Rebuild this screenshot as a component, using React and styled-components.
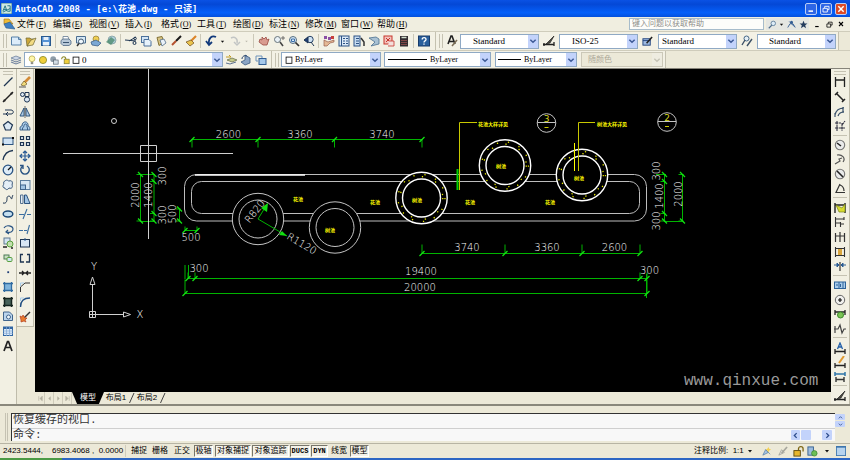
import styled, { createGlobalStyle, css } from 'styled-components';

const GlobalStyle = createGlobalStyle`
  * { box-sizing: border-box; }
  body {
    margin: 0;
    background: #ece9d8;
    font-family: "Liberation Sans", "Noto Sans CJK SC", sans-serif;
    font-size: 9px;
    line-height: 12px;
    color: #000;
  }
  button, input, select {
    font: inherit;
    color: inherit;
    margin: 0;
    padding: 0;
    border: 0;
    background: none;
    border-radius: 0;
  }
  svg { display: block; }
`;

const Window = styled.div`
  display: flex;
  flex-direction: column;
  min-height: 100vh;
  background: #ece9d8;
`;

/* ---------- title bar ---------- */

const TitleBar = styled.header`
  display: flex;
  align-items: center;
  height: 17px;
  padding: 0 3px 0 1px;
  gap: 3px;
  background: linear-gradient(#0a52e4, #0448d6 25%, #0560fa 75%, #0450dc);
  color: #fff;
`;

const Title = styled.h1`
  flex: 1;
  margin: 0;
  font: bold 9px/14px "DejaVu Sans Mono", "Noto Sans CJK SC", monospace;
  white-space: pre;
`;

const WindowButton = styled.button`
  display: flex;
  align-items: center;
  justify-content: center;
  width: 12px;
  height: 12px;
  border: 1px solid #b9cdf6;
  border-radius: 2px;
  background: ${props => (props.$close ? '#dc4a26' : '#2e66e6')};
`;

/* ---------- menu bar ---------- */

const MenuBar = styled.nav`
  display: flex;
  align-items: center;
  height: 14px;
  padding: 0 3px 0 3px;
  background: #f0eee0;
`;

const MenuItem = styled.button`
  width: 36px;
  text-align: left;
  white-space: nowrap;
  font: 9px/12px "Liberation Serif", "Noto Sans CJK SC", serif;
`;

const MenuKey = styled.span`
  margin-left: 1px;
  font-size: 8px;
`;

const MenuLogo = styled.span`
  width: 14px;
`;

const MenuSpace = styled.span`
  flex: 1;
`;

const HelpInput = styled.input`
  width: 135px;
  height: 12px;
  padding: 0 2px;
  border: 1px solid #a7bccb;
  background: #fdfdfa;
  font-size: 8px;
  &::placeholder { color: #8f8f8a; }
`;

const MenuTools = styled.div`
  display: flex;
  align-items: center;
  height: 12px;
  margin-left: 2px;
  margin-right: 2px;
  background: #e4e6e2;
`;

/* ---------- toolbars ---------- */

const ToolRow = styled.div`
  display: flex;
  align-items: center;
  height: ${props => props.$height}px;
  border-top: 1px solid #cfccbb;
`;

const ToolBar = styled.div`
  display: flex;
  align-items: center;
  height: 100%;
  padding-left: 3px;
  padding-right: ${props => props.$end || 3}px;
  background: #f3f1e5;
  border-right: 1px solid #c4c1b0;
`;

const Grip = styled.span`
  width: 4px;
  height: 14px;
  margin-right: 1px;
  border-left: 1px solid #c5c2b2;
  border-right: 1px solid #c5c2b2;
`;

const ToolButton = styled.button`
  display: flex;
  align-items: center;
  justify-content: center;
  width: ${props => props.$width || 15}px;
  height: 15px;
  flex: none;
`;

const Separator = styled.span`
  width: 1px;
  height: 14px;
  margin: 0 2px;
  background: #cbc8b8;
`;

const Combo = styled.label`
  display: flex;
  align-items: center;
  gap: 1px;
  width: ${props => props.$width}px;
  min-width: 0;
  height: 15px;
  margin-left: ${props => props.$before || 1}px;
  padding-left: ${props => props.$indent || 3}px;
  border: 1px solid ${props => (props.$off ? '#cbc8b8' : '#8fa9c4')};
  background: ${props => (props.$off ? '#ece9d8' : '#fff')};
  color: ${props => (props.$off ? '#aca899' : '#000')};
`;

const Choice = styled.select`
  flex: 1;
  min-width: 0;
  appearance: none;
  font: ${props => props.$size || 9}px/12px "Liberation Serif", "Noto Sans CJK SC", serif;
  opacity: 1;
`;

const Arrow = styled.span`
  display: flex;
  align-items: center;
  justify-content: center;
  width: 10px;
  height: 13px;
  flex: none;
  background: ${props => (props.$off ? '#eeece0' : '#c3d3fb')};
`;

/* ---------- work area ---------- */

const Work = styled.main`
  display: flex;
  flex: 1;
  align-items: stretch;
  border-top: 1px solid #86847a;
`;

const Palette = styled.div`
  display: flex;
  flex-direction: column;
  width: ${props => props.$width}px;
  align-self: ${props => (props.$short ? 'flex-start' : 'stretch')};
  padding-top: 2px;
  background: #f2f0e3;
  border-right: 1px solid #bfbcab;
  ${props => props.$short && css`
    padding-bottom: 2px;
    border-bottom: 1px solid #bfbcab;
  `}
`;

const PaletteGrip = styled.span`
  height: 4px;
  margin: 0 3px 0;
  border-top: 1px solid #c5c2b2;
  border-bottom: 1px solid #c5c2b2;
`;

const PaletteList = styled.div`
  display: flex;
  flex-direction: column;
  height: ${props => props.$height}px;
`;

const PaletteButton = styled.button`
  display: flex;
  flex: 1;
  align-items: center;
  justify-content: center;
`;

const PaletteRule = styled.span`
  height: 1px;
  margin: 1px 2px 2px;
  background: #c5c2b2;
`;

const Center = styled.section`
  display: flex;
  flex-direction: column;
  flex: 1;
  min-width: 0;
  margin-left: 1px;
`;

const Canvas = styled.div`
  flex: 1;
  background: #000;
  svg { width: 100%; height: auto; }
`;

const Tabs = styled.div`
  display: flex;
  align-items: stretch;
  height: 12px;
  padding-left: 1px;
  background: #ece9d8;
`;

const TabNav = styled.button`
  display: flex;
  align-items: center;
  justify-content: center;
  width: 9px;
  border-right: 1px solid #cfccbb;
`;

const Tab = styled.button`
  width: 32px;
  text-align: center;
  font-size: 8px;
  line-height: 12px;
  white-space: nowrap;
  ${props => props.$active && css`
    background: #000;
    color: #fff;
    clip-path: polygon(0 0, 100% 0, 84% 100%, 16% 100%);
  `}
`;

const PlainTab = styled(Tab)`
  width: 24px;
`;

/* ---------- command window and status ---------- */

const CommandDock = styled.section`
  display: flex;
  padding: 7px 5px 2px 5px;
  border-top: 2px solid #8a887c;
  border-bottom: 1px solid #b7b4a4;
  background: #ece9d8;
`;

const DockGrip = styled.span`
  width: 3px;
  margin-right: 3px;
  border-left: 1px solid #c5c2b2;
  border-right: 1px solid #c5c2b2;
`;

const CommandBox = styled.div`
  flex: 1;
  border-top: 1px solid #333;
  border-left: 1px solid #333;
  background: #f8f8f8;
`;

const commandText = css`
  font: 11px/13px "Liberation Mono", "Noto Sans CJK SC", monospace;
  color: #333;
`;

const CommandLog = styled.div`
  height: 15px;
  padding-left: 1px;
  border-bottom: 1px solid #cfcfcf;
  ${commandText}
`;

const CommandLine = styled.div`
  display: flex;
  align-items: center;
  height: 12px;
  padding-left: 1px;
  padding-right: 3px;
  label, input { ${commandText} }
  input { flex: 1; min-width: 0; height: 12px; }
`;

const ScrollPart = styled.button`
  display: flex;
  align-items: center;
  justify-content: center;
  width: ${props => props.$width}px;
  height: ${props => props.$height}px;
  margin-right: ${props => props.$after || 0}px;
  border-radius: 1px;
  background: #c3d3fb;
`;

const CommandSide = styled.div`
  display: flex;
  flex-direction: column;
  gap: 1px;
  width: 10px;
  padding-top: 1px;
`;

const StatusBar = styled.footer`
  display: flex;
  align-items: center;
  height: 14px;
  padding: 0 3px;
  font-size: 8px;
`;

const Coordinates = styled.output`
  width: 123px;
  white-space: pre;
  border-right: 1px solid #cfccbb;
`;

const Mode = styled.button`
  width: ${props => props.$width}px;
  height: 12px;
  margin-left: ${props => props.$before || 1}px;
  line-height: 10px;
  white-space: nowrap;
  border: 1px solid ${props => (props.$on ? '#fff' : 'transparent')};
  ${props => props.$on && css`
    border-top-color: #77756a;
    border-left-color: #77756a;
    background: #f3f1e8;
  `}
  ${props => props.$latin && css`
    font-family: "Liberation Mono", monospace;
    font-size: 7px;
    font-weight: bold;
  `}
`;

const ScaleButton = styled.button`
  display: flex;
  align-items: center;
  gap: 1px;
  margin-left: auto;
  margin-right: 6px;
  white-space: pre;
`;

const TaskEdge = styled.div`
  height: 2px;
  background: linear-gradient(90deg, #4c9a45 62px, #2c66c4 62px);
`;

/* ---------- icons, all on a 12 unit grid ---------- */

const N = '#1e3552';
const B = '#a9cdec';
const G = '#58a03c';
const Y = '#f0cf3c';

const icons = {
  app: <><rect width="12" height="12" fill="#cfe8e4" stroke="#3d7f86" /><path d="M2 9l2.500-6 2 6M3 7h3M7 3h3v6H7M2 10l8-4" fill="none" stroke="#1c7180" /></>,
  doc: <><path d="M1 1h5l4 5H1z" fill="#eebb36" stroke="#9c6c14" strokeWidth=".6" /><path d="M1 6l6-2 5 7-9-1z" fill="#3d7fc4" stroke="#2a5788" strokeWidth=".6" /></>,
  new: <><path d="M1.500 2h7L11 4.500V10H1.500z" fill="#dcecfa" stroke="#5680a8" /><path d="M8.500 2v2.500H11" fill="none" stroke="#5680a8" /></>,
  open: <><path d="M1 3h4l1 1h3v2l-6 5H2z" fill="#cda83a" stroke="#6f6634" strokeWidth=".7" /><path d="M2 11l4-6 5-2-3 7z" fill="#f2db83" stroke="#6f6634" strokeWidth=".7" /></>,
  save: <><rect x="1.500" y="1.500" width="9" height="9" fill="#5692d4" stroke="#28598f" /><path d="M3.500 2h5v3h-5zM3 7h6v3.500H3z" fill="#e6f0fa" /></>,
  plot: <><path d="M3 1.500h5l1 3H3z" fill="#fff" stroke="#667b92" strokeWidth=".8" /><path d="M1 5.500l2-1.500h6l2 2v3l-2 1.500H3L1 8.500z" fill="#b8c8d8" stroke="#506a86" strokeWidth=".8" /><path d="M3 7.500h6" stroke="#39536f" /></>,
  preview: <><path d="M1.500 1.500h9v6.500h-9z" fill="#d5e8f6" stroke="#4b6d90" /><circle cx="6" cy="6.500" r="2.500" fill="#eff7fd" stroke="#40566d" /><path d="M4 8.500L2 11" stroke="#333" strokeWidth="1.500" /></>,
  publish: <><circle cx="6" cy="4" r="3" fill="#f0cf52" stroke="#8c7730" strokeWidth=".7" /><path d="M1 7l5-2 5 3-3 3-6-1z" fill="#7ba7d4" stroke="#3d608a" strokeWidth=".8" /></>,
  dwf: <><circle cx="7" cy="5" r="4" fill="#b2cfda" stroke="#6b8b8d" strokeWidth=".6" /><path d="M6 2l4 3-4 5-5-3z" fill="#4e8b70" opacity=".8" /></>,
  cut: <><path d="M0 5l11 1M4 6l7-4" stroke={N} /><circle cx="9.500" cy="8" r="1.500" fill="none" stroke={N} /><circle cx="10" cy="3.500" r="1.300" fill="none" stroke={N} /></>,
  copy: <><rect x="1.500" y="1.500" width="7" height="6" fill="#d5e6f6" stroke="#4c719b" /><path d="M4 4.500h5l2 2V11H4z" fill="#e7f2fc" stroke="#4c719b" /></>,
  paste: <><path d="M2 2.500l5-1 2 6-5 3z" fill="#d9c583" stroke="#847337" /><path d="M5 5l4-1 2 4-4 3z" fill="#eaf2fa" stroke="#526c88" strokeWidth=".8" /></>,
  brush: <><path d="M11 1L6 6" stroke="#1a1a1a" strokeWidth="2" /><path d="M6 6L2 10" stroke="#b5512f" strokeWidth="2" /></>,
  block: <><path d="M11 1L6 6" stroke="#db842a" strokeWidth="2.200" /><path d="M1 7l5-2 3 3-4 3z" fill="#e9c34e" stroke="#6d4c20" strokeWidth=".7" /></>,
  undo: <path d="M11 2C7 0 3 3 4 9M1 6l3 4 3-3" fill="none" stroke="#123a7c" strokeWidth="1.800" />,
  redo: <path d="M2 3c4-2 7 1 6 5M5 7l3 3 3-3" fill="none" stroke="#c2c5c4" strokeWidth="1.500" />,
  pan: <><path d="M2 4l2 1V2l2 2 2-2 1 3 2-1-2 6H5L1 7z" fill="#d99b90" stroke="#9a4a43" strokeWidth=".8" /></>,
  zoom: <><circle cx="4.500" cy="4.500" r="3" fill="#e9f1f6" stroke="#68747c" /><path d="M7 7l3 4" stroke="#444" strokeWidth="1.500" /><path d="M8 3h4M10 1v4" stroke="#555" strokeWidth=".8" /></>,
  zoomWin: <><circle cx="5" cy="5" r="3.500" fill="#d8e9f6" stroke="#556c80" /><path d="M3.500 4h3v2.500h-3z" fill="none" stroke="#3d6fa8" /><path d="M7.500 7.500L11 11" stroke="#333" strokeWidth="1.700" /></>,
  zoomPrev: <><circle cx="7" cy="4.500" r="3.200" fill="#cfe2f3" stroke="#2a4468" /><path d="M1 5l4-3v6zM8 7l3 4" fill="#1e3d77" stroke="#1e3552" /></>,
  props: <><path d="M1 1h3v3H1zM5 2h3v3H5z" fill="#8a4fa4" /><path d="M8 1h3v3H8z" fill="#c73f3a" /><path d="M1 5l4 2 6-2v2l-4 1-3 3H1z" fill="#e4b996" stroke="#8c4b3a" strokeWidth=".6" /></>,
  center: <><rect x="1" y="1" width="10" height="10" fill="#dbe9f7" stroke="#2c5285" /><path d="M3.500 1v10M5 3.500h2M8 3.500h2M5 6h2M8 6h2M5 8.500h2M8 8.500h2" stroke="#2c5285" /></>,
  palette: <><rect x="1" y="1" width="6" height="10" fill="#c7dcf1" stroke="#2c5285" /><path d="M3 3.500h3M3 6h3M3 8.500h3" stroke="#2c5285" /><path d="M8 3l3 4v4" fill="none" stroke="#333" strokeWidth="1.500" /></>,
  sheet: <><path d="M1 3l7-1 3 2v5l-8 2 4-4z" fill="#a9c1d3" stroke="#4d7190" strokeWidth=".8" /></>,
  markup: <><rect x="1" y="1" width="8" height="8" fill="#f3c2bc" stroke="#c7362d" /><path d="M3 3l4 4M7 3L3 7" stroke="#c7362d" /><path d="M6 6h5v5H5" fill="#f4dedb" stroke="#c7362d" strokeWidth=".8" /></>,
  calc: <><rect x="2" y="1" width="8" height="10.500" fill="#332d31" /><path d="M3.500 2.500h5" stroke="#cfdccb" strokeWidth="1.500" /><path d="M3.500 5.500h5M3.500 7.500h5M3.500 9.500h5" stroke="#d16060" strokeDasharray="1 1" /></>,
  help: <><rect x=".5" y="1" width="11" height="10" fill="#2a5f9c" stroke="#163a6b" /><path d="M4.200 4.500c0-2.500 3.800-2.500 3.800 0 0 1.500-2 1.300-2 3M6 8.500v1.300" fill="none" stroke="#fff" strokeWidth="1.300" /></>,
  textStyle: <><path d="M2 9L5 1h1l3 8M3.200 6.500H8" fill="none" stroke="#222" strokeWidth="1.600" /><path d="M11 5l-5 6" stroke="#7a6c54" strokeWidth="1.500" /></>,
  dimStyle: <><path d="M0 9.500h11M1 8v3M11 7v4" stroke="#222" strokeWidth="1.300" /><path d="M11 1L5 7l-2 2 4-1z" fill="#4b4a42" stroke="#222" strokeWidth=".7" /></>,
  tableStyle: <><rect x="1" y="3" width="8" height="7" fill="#9fbbe2" stroke="#1f417c" /><path d="M1 5h8" stroke="#1f417c" /><path d="M11 1L5 8" stroke="#222" strokeWidth="1.700" /></>,
  leaderStyle: <><circle cx="5.500" cy="3.500" r="2.500" fill="#e4eef5" stroke="#476887" /><path d="M1 10l3-5M11 4l-5 7" stroke="#3d5166" strokeWidth="1.400" /></>,
  layers: <><path d="M1 4l5-2 5 2-5 2z" fill="#ccd6e6" stroke="#5f7492" strokeWidth=".7" /><path d="M1 6l5 2 5-2M1 8l5 2 5-2" fill="none" stroke="#71839f" strokeWidth="1.100" /></>,
  layerPrev: <><path d="M2 6l5-2 5 2-5 2z" fill="#c6cc8c" stroke="#6d7450" strokeWidth=".8" /><path d="M1 9l4 1 6-2" fill="none" stroke="#5f7492" /><path d="M1 3h5l-2-2" fill="none" stroke="#c59c22" /></>,
  layerState: <><path d="M5 1l5 3v5l-5 2-4-3 4-2z" fill="#8aa4c4" stroke="#3a587f" strokeWidth=".8" /><path d="M2 5c0-3 3-4 5-3" fill="none" stroke="#2a466c" /></>,
  layerIso: <><rect x="4" y="4.500" width="7" height="6" fill="#a5c8ea" stroke="#325f94" /><path d="M1 2h6v2M1 2v5h2" fill="none" stroke="#6e93ba" /></>,
  line: <path d="M2 10L10.500 1.500" stroke={N} strokeWidth="1.200" />,
  xline: <><path d="M1 11L11 1" stroke="#222" strokeWidth="1.400" /><path d="M1 11l1-3 2 2zM11 1l-1 3-2-2z" fill="#222" /></>,
  pline: <path d="M1 8h4M3 4h6c3 0 3 4 0 4H5M6 6L4 8l2 2" fill="none" stroke={N} />,
  polygon: <path d="M6 1.500l4.500 3.500-2 5h-5l-2-5z" fill="#dbe9f4" stroke={N} strokeWidth="1.200" />,
  rect: <><rect x="1" y="3" width="10" height="6.500" fill="#d0e3f4" stroke="#2d5480" /><path d="M0 9.500h2M10 3h2" stroke="#111" strokeWidth="2" /></>,
  arc: <path d="M1 11C2 6 5 2 11 1.500" fill="none" stroke={N} strokeWidth="1.300" />,
  circle: <><circle cx="6" cy="6" r="4.800" fill="#dcebf7" stroke="#2b5584" strokeWidth="1.300" /><path d="M6 6l3-3" stroke="#111" strokeWidth="1.300" /></>,
  cloud: <path d="M3 2c2-2 3 0 4 0 3-1 4 1 3 4 1 2 0 4-3 3-2 3-4 1-4 0-3 0-2-3-1-4-1-1 0-3 1-3z" fill="#e4eef6" stroke="#38567a" />,
  spline: <path d="M1 10c4 1 4-3 4-5s3-3 4 0 1-2 2-3" fill="none" stroke={N} />,
  ellipse: <ellipse cx="6" cy="6" rx="4.800" ry="3" fill="#c4dff0" stroke="#1d4a78" strokeWidth="1.500" />,
  ellipseArc: <path d="M2 5c2-4 9-2 9 1s-3 4-6 3M6 7L4 9l3 2" fill="none" stroke="#2b5584" strokeWidth="1.200" />,
  insert: <><rect x="2" y="1" width="6" height="6" fill="#d3e4f1" stroke="#5f7891" /><circle cx="8" cy="7" r="3" fill="#c3dfae" stroke={G} /><path d="M1 10h4M9 11h2" stroke="#222" strokeWidth="1.500" /></>,
  makeBlock: <><rect x="2" y="3" width="5" height="4" fill="#c9dfc2" stroke="#4c7b56" /><rect x="5" y="5.500" width="5" height="4" rx="1" fill="#d0e6ef" stroke={G} /></>,
  point: <rect x="5.300" y="5.300" width="1.800" height="1.800" fill="#1e3d77" />,
  hatch: <><rect x="2.500" y="2.500" width="7" height="7" fill="#7fb4dc" /><path d="M1 2.500h10M1 9.500h10M2.500 1v10M9.500 1v10" stroke="#2f6ba1" strokeWidth="1.300" /></>,
  gradient: <><rect x="2.500" y="2.500" width="7" height="7" fill="#49635a" /><path d="M1 2.500h10M1 9.500h10M2.500 1v10M9.500 1v10" stroke="#172621" strokeWidth="1.500" /></>,
  region: <><path d="M1.500 2h6l3 3v5.500h-9z" fill="#bcd5ed" stroke="#41658c" /><circle cx="6.500" cy="7" r="2" fill="#eef6fc" stroke="#41658c" /></>,
  table: <><rect x="1.500" y="2" width="9" height="8.500" fill="#d9e8f8" stroke="#3266a3" /><path d="M1 3h10" stroke="#3266a3" strokeWidth="2" /><path d="M4.500 2v9M7.500 2v9M1 6h10M1 8.300h10" stroke="#7fa6d2" strokeWidth=".7" /></>,
  mtext: <path d="M2 11L5.500 1.500h1L10 11M3.500 7.500h5.500" fill="none" stroke="#222" strokeWidth="1.700" />,
  erase: <><path d="M11 1L5 7" stroke="#d38b37" strokeWidth="2.600" /><path d="M5 5l3 3-3 2-3-1z" fill="#f0da79" stroke="#6d5c31" strokeWidth=".7" /><path d="M0 11h7" stroke="#555" /></>,
  copyObj: <><circle cx="3.500" cy="3.500" r="2" fill="#dce8f2" stroke={N} /><path d="M6 1.500h4v4H6z" fill="none" stroke={N} /><circle cx="8" cy="8.500" r="2.600" fill="#dce8f2" stroke={N} /></>,
  mirror: <><path d="M5 2v8H1zM7 2v8h4z" fill="#aecbe4" stroke="#31577f" /><path d="M6 0v12" stroke="#333" strokeWidth=".7" /></>,
  offset: <path d="M1 10V8c0-2 2-2 2-2 0-6 7-5 6 0 2 0 2 3 2 4zM3.500 10V8c2-1 1-4 3-4s1 3 2 4v2" fill="#a9cbe8" stroke="#31577f" strokeWidth=".9" />,
  array: <path d="M1.500 1.500h3v3h-3zM7.500 1.500h3v3h-3zM1.500 7.500h3v3h-3zM7.500 7.500h3v3h-3z" fill="#e2ebf2" stroke={N} strokeWidth="1.200" />,
  move: <path d="M6 1v10M1 6h10M4 3l2-2 2 2M4 9l2 2 2-2M3 4L1 6l2 2M9 4l2 2-2 2" fill="none" stroke="#2b5c94" strokeWidth="1.200" />,
  rotate: <path d="M4 2a4.300 4.300 0 1 0 4 0M4 5V1.500H1" fill="none" stroke="#2b5584" strokeWidth="1.400" />,
  scale: <><rect x="1.500" y="1.500" width="9.500" height="9" fill="#d8e7f4" stroke="#5b7d9e" /><rect x="1.500" y="6" width="5" height="4.500" fill="#a3c5e4" stroke="#41658c" /></>,
  stretch: <><path d="M1.500 2H4v8.500H1.500z" fill="#e8eff5" stroke="#54718f" /><path d="M5.500 2h2l3.500 8.500H5.500z" fill="#a3c5e4" stroke="#2d5480" /></>,
  trim: <path d="M0 6.500h5M8 6.500h4M8 1L4 11" stroke="#3a6d9f" strokeWidth="1.100" />,
  extend: <path d="M0 7.500h4M5 7.500h3M10.500 2L8 11" stroke="#3a6d9f" strokeWidth="1.100" />,
  breakPt: <><rect x="1.500" y="2.500" width="9" height="7.500" fill="#d8e7f4" stroke={N} /><path d="M6 1v3" stroke="#2b5c94" /></>,
  breakIt: <path d="M4 2.500H1.500V10H5M8 2.500h2.500V10H7" fill="none" stroke={N} strokeWidth="1.300" />,
  join: <path d="M0 6h12M3 4l2 2-2 2M9 4L7 6l2 2" fill="none" stroke="#222" strokeWidth="1.300" />,
  chamfer: <><path d="M1.500 11V6L6 2h5" fill="none" stroke="#333" /><path d="M1.500 5V2H5" fill="none" stroke={B} /></>,
  fillet: <><path d="M1.500 11c0-6 3-9 9.500-9" fill="none" stroke="#1f4d82" strokeWidth="1.400" /><path d="M1.500 5V2H5" fill="none" stroke={B} /></>,
  explode: <><path d="M11 1L5 7" stroke="#333" strokeWidth="1.500" /><path d="M1 5l2 1 1-2 2 3 2 0-2 2 1 2-2-1-3 1 0-2z" fill="#e87b2e" stroke="#b53f1d" strokeWidth=".7" /></>,
  dimLinear: <path d="M1.500 1v10M10.500 1v10M1 4h10" stroke="#222" strokeWidth="1.300" />,
  dimAligned: <path d="M3 3l6 6M1 4l3-3M8 11l3-3" stroke="#222" strokeWidth="1.500" />,
  dimArc: <path d="M1 9c1-5 4-7 9-7M4 10c1-3 3-4 6-4M1 7v4M9 1v6" fill="none" stroke="#39506a" strokeWidth="1.200" />,
  ordinate: <path d="M1 3h6M1 8h10M3 1v10M8 3v8M8 5l3-4" fill="none" stroke="#334" strokeWidth="1.100" strokeDasharray="3 .6" />,
  radius: <><circle cx="6" cy="6" r="4.700" fill="#e9eaea" stroke="#777" strokeWidth="1.100" /><path d="M7 7L3 4" stroke="#222" strokeWidth="1.500" /></>,
  jogged: <path d="M3 1c5-1 9 3 6 7M1 10l5-3-1-2 3-1" fill="none" stroke="#555" strokeWidth="1.200" />,
  diameter: <><circle cx="6" cy="6" r="4.700" fill="#e9eaea" stroke="#777" strokeWidth="1.100" /><path d="M3 3l6 6" stroke="#222" strokeWidth="1.600" /></>,
  angular: <path d="M6 1L2 9.500h9M6 2c3 1 4 3 4 6" fill="none" stroke="#333" strokeWidth="1.200" />,
  quick: <><path d="M1 1v10M11 1v10M1 3h10" stroke="#222" strokeWidth="1.400" /><path d="M2 3l6 3 3-4v8H5z" fill="#d8dc2f" stroke="#77811c" strokeWidth=".7" /></>,
  baseline: <path d="M1.500 1v10M6.500 6v5M10 1v3M1 3h9M1 7h6M6 8h4" stroke="#333" strokeWidth="1.100" />,
  cont: <path d="M1.500 2v9M6 1v10M10.500 2v9M1 5h10" stroke="#333" strokeWidth="1.200" />,
  space: <><path d="M1.500 1v10M10.500 1v10M1 2.500h10M1 9.500h10" stroke="#333" strokeWidth="1.100" /><rect x="4" y="3" width="4" height="6" fill="#d9a63f" /></>,
  breakDim: <><path d="M6 2v9" stroke="#333" strokeWidth="1.200" /><path d="M0 5h4M8 5h4M3 3l2 2-2 2zM9 3L7 5l2 2z" fill="#2b5c94" stroke="#2b5c94" /></>,
  tolerance: <><rect x=".5" y="3" width="11" height="6.500" fill="#a9cdec" stroke="#2d6299" /><path d="M5 3v6M9 3v6M2 6h2M6.500 5v3" stroke="#2d6299" /></>,
  centerMark: <><circle cx="6" cy="6" r="4.700" fill="#f1f1ee" stroke="#666" /><path d="M4 6h4M6 4v4" stroke="#111" strokeWidth="1.200" /></>,
  inspect: <><path d="M1 2v5M11 2v5M1 4h10" stroke="#222" strokeWidth="1.300" /><circle cx="6.500" cy="7" r="3" fill="#7bc454" stroke="#3b8a2b" /></>,
  jogLine: <path d="M1 3v7M0 6h4l2-4 2 8 2-4h2" fill="none" stroke="#444" strokeWidth="1.200" />,
  dimEdit: <><path d="M3.500 7L6 1l2.500 6M4.500 5h3" fill="none" stroke="#225fa8" strokeWidth="1.300" /><path d="M1 7v5M11 7v5M1 9.500h10" stroke="#222" strokeWidth="1.300" /></>,
  dimTextEdit: <><path d="M1 7v5M11 7v5M1 9.500h10" stroke="#222" strokeWidth="1.300" /><path d="M10 0L5 7" stroke="#e09a32" strokeWidth="2" /></>,
  dimUpdate: <><path d="M1 1v4M11 1v4M1 3h10" stroke="#2e74a8" strokeWidth="1.500" /><path d="M2 6v5M10 6v5M2 8.500h8" stroke="#333" strokeWidth="1.400" /></>,
  search: <><circle cx="7" cy="4.500" r="3" fill="#dcecf8" stroke="#4a6b8c" /><path d="M5 7l-4 4" stroke="#4a6b8c" strokeWidth="1.500" /></>,
  contact: <><circle cx="6" cy="3" r="2" fill="#345e94" /><path d="M1 10l3-5h4l3 5M3 2l7 7" fill="none" stroke="#345e94" strokeWidth="1.200" /></>,
  star: <path d="M6 1l1.500 3.500 3.800.2-3 2.400 1 3.900L6 8.800 2.700 11l1-3.900-3-2.400 3.800-.2z" fill="#223b5c" />,
  bulb: <><circle cx="6" cy="4.500" r="3.500" fill="#fff6a8" stroke="#a69b45" strokeWidth=".8" /><path d="M4.500 8.500h3v2.500h-3z" fill="#8d8d83" /></>,
  sun: <circle cx="6" cy="6" r="4.300" fill={Y} stroke="#8c8a26" />,
  freeze: <><circle cx="5" cy="5" r="3.500" fill="#8f9da9" /><rect x="5.500" y="6" width="5.500" height="5" fill="#d5dfe7" stroke="#56626d" strokeWidth=".8" /></>,
  lock: <><path d="M2 5c0-4 5-4 5 0" fill="none" stroke="#8d8a2e" strokeWidth="1.300" /><rect x="5" y="5" width="6" height="5.500" fill={Y} stroke="#77742a" strokeWidth=".8" /></>,
  swatch: <rect x="2.500" y="2.500" width="7" height="7.500" fill="#fff" stroke="#111" />,
  annVis: <><path d="M2 10l3-6 3 3zM5 4l5 5" fill="#a8c5e3" stroke="#557fa9" strokeWidth=".8" /><path d="M8 1l1 2 2 1-2 1-1 2-1-2-2-1 2-1z" fill="#f3d052" /></>,
  annAuto: <><path d="M2 10l3-6 3 3z" fill="#dfe0da" stroke="#9b9c95" strokeWidth=".8" /><path d="M11 1L5 8" stroke="#a6a69d" strokeWidth="1.800" /></>,
  padlock: <><path d="M6 5V3c0-3 5-3 5 0v3" fill="none" stroke="#7b6413" strokeWidth="1.400" /><rect x="1" y="5" width="7" height="6" fill="#e6b62d" stroke="#5f4a0b" /></>,
  standards: <><rect x="1" y="1" width="6" height="9" fill="#9dbcdf" stroke="#35608f" /><circle cx="8" cy="8" r="3" fill="#6cbf56" stroke="#347a2b" strokeWidth=".7" /></>,
  clean: <rect x="0" y="1" width="12" height="11" fill="#b7d3ee" stroke="#3d75ad" strokeWidth="2" />,
  caret: <path d="M2 4h8L6 9z" fill="#111" />,
  caretOff: <path d="M3 4h6L6 8z" fill="#b9b7aa" />,
  min: <path d="M2 9.500h6" stroke="currentColor" strokeWidth="2" />,
  restore: <path d="M4 4.500V2h6.500v5H8M1.500 5H8v5.500H1.500z" fill="none" stroke="currentColor" strokeWidth="1.300" />,
  close: <path d="M2 2l8 8M10 2l-8 8" stroke="currentColor" strokeWidth="2.200" />,
  down: <path d="M2 4l4 4 4-4" fill="none" stroke="#3d5a96" strokeWidth="2.200" />,
  downOff: <path d="M2 4l4 4 4-4" fill="none" stroke="#c5c3b5" strokeWidth="2" />,
  up: <path d="M2 8l4-4 4 4" fill="none" stroke="#3d5a96" strokeWidth="2.200" />,
  left: <path d="M8 2L4 6l4 4" fill="none" stroke="#2d4c8c" strokeWidth="2.200" />,
  right: <path d="M4 2l4 4-4 4" fill="none" stroke="#2d4c8c" strokeWidth="2.200" />,
  navFirst: <path d="M3 2v8M9 2L5 6l4 4z" fill="#b1ae9f" stroke="#b1ae9f" />,
  navPrev: <path d="M8 2L4 6l4 4z" fill="#b1ae9f" />,
  navNext: <path d="M4 2l4 4-4 4z" fill="#b1ae9f" />,
  navLast: <path d="M9 2v8M3 2l4 4-4 4z" fill="#b1ae9f" stroke="#b1ae9f" />,
};

const Icon = ({ name, size = 12 }) => (
  <svg width={size} height={size} viewBox="0 0 12 12" aria-hidden="true">{icons[name]}</svg>
);

const LineSample = ({ width }) => (
  <svg width={width} height="3" aria-hidden="true">
    <path d={`M0 1.500h${width - 2}`} stroke="#000" />
  </svg>
);

const Slash = () => (
  <svg width="7" height="12" aria-hidden="true">
    <path d="M1.500 11L6 1" stroke="#444" fill="none" />
  </svg>
);

const Drop = ({ label, value, width, before, indent, size, off, children }) => (
  <Combo $width={width} $before={before} $indent={indent} $off={off}>
    {children}
    <Choice aria-label={label} disabled={off} $size={size}>
      <option>{value}</option>
    </Choice>
    <Arrow $off={off}><Icon name={off ? 'downOff' : 'down'} size={8} /></Arrow>
  </Combo>
);

/* ---------- data ---------- */

const menus = [
  ['文件', 'F'], ['编辑', 'E'], ['视图', 'V'], ['插入', 'I'], ['格式', 'O'], ['工具', 'T'],
  ['绘图', 'D'], ['标注', 'N'], ['修改', 'M'], ['窗口', 'W'], ['帮助', 'H'],
];

const standardTools = [
  'new', 'open', 'save', '|', 'plot', 'preview', 'publish', 'dwf', '|',
  'cut', 'copy', 'paste', 'brush', 'block', '|', 'undo', 'caret', 'redo', 'caretOff', '|',
  'pan', 'zoom', 'zoomWin', 'zoomPrev', '|',
  'props', 'center', 'palette', 'sheet', 'markup', 'calc', '|', 'help',
];

const drawTools = [
  'line', 'xline', 'pline', 'polygon', 'rect', 'arc', 'circle', 'cloud', 'spline', 'ellipse',
  'ellipseArc', 'insert', 'makeBlock', 'point', 'hatch', 'gradient', 'region', 'table', 'mtext',
];

const modifyTools = [
  'erase', 'copyObj', 'mirror', 'offset', 'array', 'move', 'rotate', 'scale', 'stretch',
  'trim', 'extend', 'breakPt', 'breakIt', 'join', 'chamfer', 'fillet', 'explode',
];

const dimensionTools = [
  'dimLinear', 'dimAligned', 'dimArc', 'ordinate', '|', 'radius', 'jogged', 'diameter', 'angular', '|',
  'quick', 'baseline', 'cont', 'space', 'breakDim', '|', 'tolerance', 'centerMark', 'inspect', 'jogLine', '|',
  'dimEdit', 'dimTextEdit', 'dimUpdate', '|', 'dimStyle',
];

const modes = [
  { text: '捕捉', width: 20, before: 3 },
  { text: '栅格', width: 20 },
  { text: '正交', width: 20, before: 2 },
  { text: '极轴', width: 19, on: true, before: 2 },
  { text: '对象捕捉', width: 36, on: true, before: 2 },
  { text: '对象追踪', width: 37, on: true },
  { text: 'DUCS', width: 20, on: true, latin: true },
  { text: 'DYN', width: 17, on: true, latin: true },
  { text: '线宽', width: 20 },
  { text: '模型', width: 19, on: true },
];

/* ---------- drawing ---------- */

const Dim = styled.text`
  font: 200 10px "DejaVu Sans Light", "DejaVu Sans", sans-serif;
  fill: #fff;
  text-anchor: middle;
`;

const Note = styled.text`
  font: bold 5px "Noto Sans CJK SC", sans-serif;
  fill: #ffff00;
`;

const BubbleText = styled.text`
  font: 9px "DejaVu Sans", sans-serif;
  fill: #d8d820;
  text-anchor: middle;
`;

const Site = styled.text`
  font: 16px "Liberation Mono", monospace;
  fill: #9a9a9a;
`;

const tick = (x, y) => `M${x - 2.5} ${y + 2.5}l5-5`;

const hDims = [
  { y: 139.5, xs: [192, 258, 334.5, 422], ext: 8 },
  { y: 253.5, xs: [422, 505, 582, 640], ext: -9 },
  { y: 278.5, xs: [188, 195, 640, 647], ext: -6 },
  { y: 293.5, xs: [185, 647], ext: -14 },
  { y: 230.5, xs: [185, 197], ext: -4 },
];

const vDims = [
  { x: 140.5, ys: [174.5, 221] },
  { x: 154, ys: [174.5, 181.5, 213.5, 221] },
  { x: 179.5, ys: [209, 221] },
  { x: 664.5, ys: [174.5, 181.5, 213.5, 221] },
  { x: 682.5, ys: [174.5, 221] },
];

const hTexts = [
  [228.5, 138, '2600'], [300, 138, '3360'], [382, 138, '3740'],
  [467, 251, '3740'], [547, 251, '3360'], [614.5, 251, '2600'],
  [199, 272, '300'], [421, 275, '19400'], [649.5, 274, '300'], [420, 291, '20000'], [191, 241, '500'],
];

// x is the baseline of the turned text, y its middle
const vTexts = [
  [138.5, 195, '2000'], [152, 195, '1400'], [165.5, 176, '300'], [165.5, 215, '300'], [175.5, 214, '500'],
  [659.5, 171, '300'], [663, 196, '1400'], [660, 221, '300'], [681.5, 194, '2000'],
];

const planters = [
  { x: 258, y: 219 },
  { x: 335, y: 227.5 },
  { x: 421.5, y: 198, ring: true },
  { x: 505, y: 165.5, ring: true },
  { x: 582, y: 175, ring: true },
];

const notes = [
  [293, 201, '花池'], [370, 204, '花池'], [465, 204, '花池'], [545, 204, '花池'],
  [325, 232, '树池'], [412, 202, '树池'], [496, 168, '树池'], [574, 180, '树池'],
  [478, 126, '花池大样详见'], [597, 126, '树池大样详见'],
];

const Drawing = () => (
  <svg viewBox="35 69 796 323" role="img" aria-label="花池">
    <g fill="none" stroke="#bdbdbd">
      <rect x="184.500" y="174.500" width="462" height="46.500" rx="12" />
      <rect x="191.500" y="181.500" width="448" height="32" rx="10" />
      <path d="M195 175h110" stroke="#fff" strokeWidth="1.500" />
    </g>

    <g fill="none" stroke="#00b400">
      {hDims.map(d => (
        <path key={d.y} d={`M${d.xs[0]} ${d.y}H${d.xs[d.xs.length - 1]}` + d.xs.map(x => `M${x} ${d.y}v${d.ext}`).join('')} />
      ))}
      {vDims.map(d => (
        <path key={d.x} d={`M${d.x} ${d.ys[0]}V${d.ys[d.ys.length - 1]}` + d.ys.map(y => `M${d.x - 4} ${y}h5`).join('')} />
      ))}
      <path d="M140 174.500h14M140 221.500h14M664 221.500h18M185 265v14M188.500 265v14M646.500 274v24M656 174.500h10" />
    </g>
    <g fill="none" stroke="#12e012" strokeWidth="1.300">
      {hDims.map(d => <path key={d.y} d={d.xs.map(x => tick(x, d.y)).join('')} />)}
      {vDims.map(d => <path key={d.x} d={d.ys.map(y => `M${d.x - 2.5} ${y - 2.5}l5 5`).join('')} />)}
    </g>

    {planters.map(p => (
      <g key={p.x} fill="#000" stroke={p.ring ? '#fff' : '#c4c4c4'} strokeWidth={p.ring ? 1.4 : 1}>
        <circle cx={p.x} cy={p.y} r="25.700" />
        <circle cx={p.x} cy={p.y} r="19" />
        {p.ring && (
          <g fill="none" stroke="#e8e800">
            <circle cx={p.x} cy={p.y} r="21.300" strokeWidth="1.300" strokeDasharray="1.300 13" />
            <circle cx={p.x} cy={p.y} r="23.500" strokeWidth="1.300" strokeDasharray="1.300 10" />
          </g>
        )}
      </g>
    ))}

    <path d="M258 219l8-13M258 219l29 17" stroke="#00b400" fill="none" />
    <path d="M268 203l-1 9-6-4zM287 236l-8-1 3-4z" fill="#12e012" />
    <path d="M457.500 169v21" stroke="#00d000" strokeWidth="2" />
    <g fill="none" stroke="#c8c800">
      <path d="M459.500 190v-67.500H477M578.500 171v-48.500H595" />
      <path d="M574.500 143v28" stroke="#ffff00" />
    </g>

    {hTexts.map(([x, y, t]) => <Dim key={x + t} x={x} y={y}>{t}</Dim>)}
    {vTexts.map(([x, y, t]) => <Dim key={x + '-' + y} transform={`translate(${x} ${y}) rotate(-90)`}>{t}</Dim>)}
    <Dim transform="translate(257.500 213.500) rotate(-52)">R820</Dim>
    <Dim transform="translate(300 246.500) rotate(31)">R1120</Dim>
    {notes.map(([x, y, t]) => <Note key={x} x={x} y={y}>{t}</Note>)}

    {[[546.5, 123, '3'], [667, 122, '2']].map(([x, y, t]) => (
      <g key={t}>
        <circle cx={x} cy={y} r="9.300" fill="none" stroke="#c4c4c4" />
        <path d={`M${x - 9} ${y - 0.5}h18`} stroke="#c4c4c4" />
        <path d={`M${x - 2} ${y + 4.5}h4`} stroke="#c8c800" />
        <BubbleText x={x} y={y - 1}>{t}</BubbleText>
      </g>
    ))}

    <g fill="none" stroke="#d0d0d0">
      <path d="M148.500 69v170M63 153.500h170M140.500 145.500h16v16h-16z" />
      <circle cx="114" cy="121" r="2.500" />
      <path d="M89.500 311.500h6v6h-6zM92.500 317v-33M90 284.500h5l-2.500-7.500zM90 314.500h33M123.500 312v5l7-2.500z" />
    </g>
    <Dim x="140" y="318">X</Dim>
    <Dim x="94" y="270">Y</Dim>
    <Site x="684" y="385">www.qinxue.com</Site>
  </svg>
);

const PaletteItems = ({ names, height }) => (
  <PaletteList $height={height}>
    {names.map((name, i) => (
      name === '|'
        ? <PaletteRule key={i} />
        : <PaletteButton key={name} aria-label={name}><Icon name={name} /></PaletteButton>
    ))}
  </PaletteList>
);

export default function App() {
  return (
    <Window>
      <GlobalStyle />
      <TitleBar>
        <Icon name="app" size={11} />
        <Title>{'AutoCAD 2008 - [e:\\花池.dwg - 只读]'}</Title>
        <WindowButton aria-label="最小化"><Icon name="min" size={9} /></WindowButton>
        <WindowButton aria-label="还原"><Icon name="restore" size={8} /></WindowButton>
        <WindowButton aria-label="关闭" $close><Icon name="close" size={8} /></WindowButton>
      </TitleBar>

      <MenuBar>
        <MenuLogo><Icon name="doc" size={12} /></MenuLogo>
        {menus.map(([text, key]) => (
          <MenuItem key={key}>{text}<MenuKey>(<u>{key}</u>)</MenuKey></MenuItem>
        ))}
        <MenuSpace />
        <HelpInput aria-label="帮助" placeholder="键入问题以获取帮助" />
        <MenuTools>
          <ToolButton $width={12} aria-label="搜索"><Icon name="search" size={9} /></ToolButton>
          <ToolButton $width={7} aria-label="搜索选项"><Icon name="caret" size={5} /></ToolButton>
          <ToolButton $width={12} aria-label="通讯中心"><Icon name="contact" size={9} /></ToolButton>
          <ToolButton $width={12} aria-label="收藏夹"><Icon name="star" size={9} /></ToolButton>
        </MenuTools>
        <ToolButton $width={12} aria-label="最小化文档"><Icon name="min" size={7} /></ToolButton>
        <ToolButton $width={12} aria-label="还原文档"><Icon name="restore" size={7} /></ToolButton>
        <ToolButton $width={12} aria-label="关闭文档"><Icon name="close" size={6} /></ToolButton>
      </MenuBar>

      <ToolRow $height={19}>
        <ToolBar $end={4}>
          <Grip />
          {standardTools.map((name, i) => {
            if (name === '|') return <Separator key={i} />;
            const small = name.startsWith('caret');
            return (
              <ToolButton key={name} aria-label={name} $width={small ? 9 : 15}>
                <Icon name={name} size={small ? 5 : 12} />
              </ToolButton>
            );
          })}
        </ToolBar>
        <ToolBar $end={2}>
          <Grip />
          <ToolButton aria-label="文字样式管理器"><Icon name="textStyle" size={12} /></ToolButton>
          <Drop label="文字样式" value="Standard" width={79} indent={12} />
          <ToolButton aria-label="标注样式管理器" $width={19}><Icon name="dimStyle" /></ToolButton>
          <Drop label="标注样式" value="ISO-25" width={79} indent={12} />
          <ToolButton aria-label="表格样式管理器" $width={19}><Icon name="tableStyle" size={11} /></ToolButton>
          <Drop label="表格样式" value="Standard" width={79} indent={3} />
          <ToolButton aria-label="多重引线样式管理器" $width={19}><Icon name="leaderStyle" /></ToolButton>
          <Drop label="多重引线样式" value="Standard" width={79} indent={11} />
        </ToolBar>
      </ToolRow>

      <ToolRow $height={18}>
        <ToolBar>
          <Grip />
          <ToolButton aria-label="图层特性管理器"><Icon name="layers" /></ToolButton>
          <Drop label="图层" value="0" width={199} indent={2}>
            <Icon name="bulb" size={10} />
            <Icon name="sun" size={10} />
            <Icon name="freeze" size={10} />
            <Icon name="lock" size={10} />
            <Icon name="swatch" size={10} />
          </Drop>
          <ToolButton aria-label="将对象的图层置为当前"><Icon name="layerPrev" size={12} /></ToolButton>
          <ToolButton aria-label="上一个图层"><Icon name="layerState" size={12} /></ToolButton>
          <ToolButton aria-label="图层状态管理器"><Icon name="layerIso" size={12} /></ToolButton>
        </ToolBar>
        <ToolBar $end={2}>
          <Grip />
          <Drop label="颜色" value="ByLayer" width={100} size={8} indent={2}>
            <Icon name="swatch" size={10} />
          </Drop>
          <Drop label="线型" value="ByLayer" width={107} before={3} size={8}>
            <LineSample width={41} />
          </Drop>
          <Drop label="线宽" value="ByLayer" width={82} before={4} size={8} indent={2}>
            <LineSample width={25} />
          </Drop>
          <Drop label="打印样式" value="随颜色" width={82} before={4} size={8} indent={6} off />
        </ToolBar>
      </ToolRow>

      <Work>
        <Palette $width={17}>
          <PaletteGrip />
          <PaletteItems names={drawTools} height={278} />
        </Palette>
        <Palette $width={17} $short>
          <PaletteGrip />
          <PaletteItems names={modifyTools} height={249} />
        </Palette>
        <Center>
          <Canvas><Drawing /></Canvas>
          <Tabs>
            <TabNav aria-label="第一个"><Icon name="navFirst" size={7} /></TabNav>
            <TabNav aria-label="上一个"><Icon name="navPrev" size={7} /></TabNav>
            <TabNav aria-label="下一个"><Icon name="navNext" size={7} /></TabNav>
            <TabNav aria-label="最后一个"><Icon name="navLast" size={7} /></TabNav>
            <Tab $active>模型</Tab>
            <PlainTab>布局1</PlainTab>
            <Slash />
            <PlainTab>布局2</PlainTab>
            <Slash />
          </Tabs>
        </Center>
        <Palette $width={19}>
          <PaletteGrip />
          <PaletteItems names={dimensionTools} height={328} />
        </Palette>
      </Work>

      <CommandDock>
        <DockGrip />
        <CommandBox>
          <CommandLog>恢复缓存的视口.</CommandLog>
          <CommandLine>
            <label htmlFor="command">命令:</label>
            <input id="command" />
            <ScrollPart $width={9} $height={10} $after={1} aria-label="向左"><Icon name="left" size={7} /></ScrollPart>
            <ScrollPart $width={10} $height={10} $after={11} aria-label="滚动条" />
            <ScrollPart $width={10} $height={10} aria-label="向右"><Icon name="right" size={7} /></ScrollPart>
          </CommandLine>
        </CommandBox>
        <CommandSide>
          <ScrollPart $width={10} $height={6} aria-label="向上"><Icon name="up" size={5} /></ScrollPart>
          <ScrollPart $width={10} $height={6} aria-label="向下"><Icon name="down" size={5} /></ScrollPart>
        </CommandSide>
      </CommandDock>

      <StatusBar>
        <Coordinates>{'2423.5444,    6983.4068 ,  0.0000'}</Coordinates>
        {modes.map(m => (
          <Mode key={m.text} $width={m.width} $on={m.on} $before={m.before} $latin={m.latin} aria-pressed={!!m.on}>{m.text}</Mode>
        ))}
        <ScaleButton>注释比例:  1:1 <Icon name="caret" size={6} /></ScaleButton>
        <ToolButton aria-label="注释可见性"><Icon name="annVis" size={11} /></ToolButton>
        <ToolButton aria-label="自动缩放" $width={17}><Icon name="annAuto" size={11} /></ToolButton>
        <ToolButton aria-label="锁定"><Icon name="padlock" size={11} /></ToolButton>
        <ToolButton aria-label="标准" $width={13}><Icon name="standards" size={11} /></ToolButton>
        <ToolButton aria-label="状态栏菜单"><Icon name="caret" size={6} /></ToolButton>
        <ToolButton aria-label="全屏显示" $width={13}><Icon name="clean" size={10} /></ToolButton>
      </StatusBar>
      <TaskEdge />
    </Window>
  );
}
